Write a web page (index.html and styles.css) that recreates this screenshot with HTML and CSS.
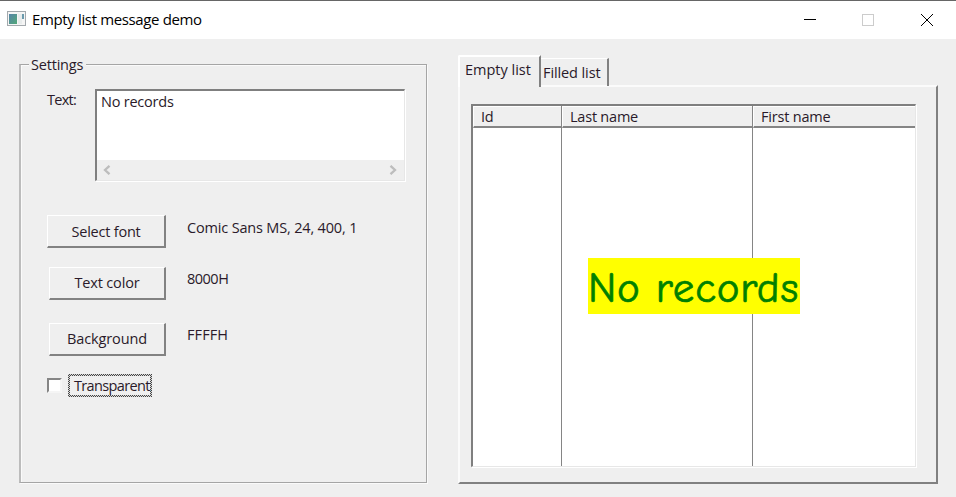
FILE: index.html
```html
<!DOCTYPE html>
<html lang="en">
<head>
<meta charset="utf-8">
<title>Empty list message demo</title>
<link rel="stylesheet" href="styles.css">
</head>
<body>
<header class="titlebar">
  <svg class="app-icon" width="19" height="16" viewBox="0 0 19 16">
    <defs><linearGradient id="g" x1="0" y1="0" x2="1" y2="1"><stop offset="0" stop-color="#5684a8"/><stop offset="1" stop-color="#52a878"/></linearGradient></defs>
    <rect x=".5" y=".5" width="18" height="14" fill="#f5f5f5" stroke="#a3a9ad"/>
    <rect x="2" y="3" width="8" height="10" fill="url(#g)"/>
    <rect x="11" y="3" width="4" height="10" fill="#e8ecec"/>
    <rect x="15" y="3" width="2" height="5" fill="#6b9bad"/>
  </svg>
  <h1 class="title">Empty list message demo</h1>
  <svg class="controls" width="132" height="16" viewBox="0 0 132 16" fill="none" shape-rendering="crispEdges">
    <path d="M0 7.5H12" stroke="#000"/>
    <rect x="58.500" y="2.500" width="11" height="11" stroke="#ccc"/>
    <path d="M117 2L129 14M129 2L117 14" stroke="#000" shape-rendering="auto"/>
  </svg>
</header>
<main class="client">
  <section class="group">
    <h2 class="legend"><span class="t-settings">Settings</span></h2>
    <div class="row row-text">
      <label class="t-text">Text:</label>
      <div class="edit sunken">
        <div class="edit-value t-norec">No records</div>
        <div class="scrollbar">
          <svg width="9" height="10" viewBox="0 0 9 10" fill="none" stroke="#bdbdbd" stroke-width="2.300"><path d="M7.500 .8L3 5L7.500 9.200"/></svg>
          <svg width="9" height="10" viewBox="0 0 9 10" fill="none" stroke="#bdbdbd" stroke-width="2.300"><path d="M1.500 .8L6 5L1.500 9.200"/></svg>
        </div>
      </div>
    </div>
    <div class="row row-font"><button class="btn btn-font"><span class="t-font">Select font</span></button><span class="value t-comic">Comic Sans MS, 24, 400, 1</span></div>
    <div class="row row-color"><button class="btn"><span class="t-color">Text color</span></button><span class="value t-hex">8000H</span></div>
    <div class="row row-back"><button class="btn"><span class="t-back">Background</span></button><span class="value t-ffff">FFFFH</span></div>
    <div class="row row-check"><span class="check"></span><span class="focus"><span class="t-trans">Transparent</span></span></div>
  </section>
  <section class="tabs">
    <nav class="tab-row">
      <div class="tab active"><span class="t-empty">Empty list</span></div>
      <div class="tab"><span class="t-filled">Filled list</span></div>
    </nav>
    <div class="panel">
      <div class="list sunken">
        <div class="col c1"><div class="head"><span class="t-id">Id</span></div></div>
        <div class="col c2"><div class="head"><span class="t-last">Last name</span></div></div>
        <div class="col c3"><div class="head"><span class="t-first">First name</span></div></div>
        <div class="message"><span class="t-msg">No records</span></div>
      </div>
    </div>
  </section>
</main>
</body>
</html>
```
FILE: styles.css
```css
* { box-sizing: border-box; }
body {
  margin: 0;
  width: 956px;
  height: 497px;
  overflow: hidden;
  background: #efefef;
  color: #2a1a2a;
  font: 14.5px/20px "Segoe UI", "Open Sans", "Noto Sans", sans-serif;
  white-space: nowrap;
}
h1, h2 { margin: 0; font: inherit; }

.titlebar {
  display: flex;
  height: 39px;
  padding: 0 20px 0 7px;
  background: #fff;
  border-top: 1px solid #666;
}
.app-icon { margin-top: 10px; }
.title { margin: 8px auto 0 6px; font-size: 15px; letter-spacing: -.36px; color: #000; }
.controls { margin: 11px 0 0; }

.client { display: flex; }

.group {
  width: 408px;
  height: 419px;
  margin: 25px 0 0 19px;
  border: 1px solid #a5a5a5;
  border-left: 2px solid #bcbcbc;
  box-shadow: 1px 1px #fafafa, inset 1px 1px #fafafa;
}
.legend {
  width: 57px;
  height: 20px;
  margin: -10px 0 0 8px;
  padding-left: 2px;
  background: #efefef;
}
.row { display: flex; margin-left: 26px; }
.row-text { height: 92px; margin-top: 15px; }
.row-text label { width: 48px; }

.sunken {
  border: 2px solid;
  border-color: #7f7f7f #e7e7e7 #e7e7e7 #7f7f7f;
  border-right-width: 1px;
  border-bottom-width: 1px;
  box-shadow: 1px 1px #fff;
  background: #fff;
}
.edit {
  display: flex;
  flex-direction: column;
  justify-content: space-between;
  width: 310px;
  height: 92px;
  margin-top: -1px;
}
.edit-value { padding: 1px 0 0 4px; }
.scrollbar {
  display: flex;
  justify-content: space-between;
  align-items: center;
  height: 20px;
  padding: 0 6px 0 5px;
  background: #efefef;
}

.row-font { height: 33px; margin-top: 33px; }
.row-color { height: 33px; margin: 19px 0 0 28px; }
.row-back { height: 34px; margin: 23px 0 0 28px; }
.btn {
  width: 117px;
  height: 33px;
  padding: 0;
  font: inherit;
  color: inherit;
  background: #efefef;
  border: solid;
  border-width: 1px 2px 2px 1px;
  border-color: #fff #828282 #828282 #fff;
}
.btn-font { width: 119px; padding-top: 1px; }
.value { margin: 3px 0 0 21px; }
.row-color .value, .row-back .value { margin-top: 2px; }
.row-check { margin-top: 17px; }
.check {
  width: 15px;
  height: 15px;
  margin-top: 4px;
  background: #fff;
  border: 2px solid;
  border-color: #858585 #f5f5f5 #f5f5f5 #858585;
}
.focus {
  width: 84px;
  height: 23px;
  margin-left: 6px;
  padding: 2px 0 0 6px;
  background:
    linear-gradient(#efefef, #efefef) 2px 2px / 80px 19px no-repeat,
    repeating-conic-gradient(#444 0 25%, #d8d8d8 0 50%) 0 0 / 2px 2px;
}

.tabs { margin: 16px 0 0 31px; }
.tab-row { display: flex; align-items: flex-end; height: 31px; }
.tab {
  width: 68px;
  height: 28px;
  padding: 4px 0 0 2px;
  border: solid;
  border-width: 1px 2px 0 0;
  border-color: #fff #818181;
}
.tab.active {
  position: relative;
  width: 83px;
  height: 32px;
  margin-bottom: -1px;
  padding: 3px 0 0 5px;
  border-width: 2px 2px 0 2px;
  border-left-color: #fff;
  border-radius: 2px 0 0 0;
  background: #efefef;
}
.panel {
  width: 480px;
  height: 399px;
  margin-top: -1px;
  padding: 17px 0 0 11px;
  border: 2px solid;
  border-color: #fbfbfb #808080 #808080 #fbfbfb;
}
.list { position: relative; display: flex; width: 445px; height: 363px; }
.col { border-right: 1px solid #858585; }
.c1 { width: 89px; }
.c2 { width: 191px; }
.c3 { flex: 1; border-right: 0; }
.head {
  height: 22px;
  padding-left: 7px;
  line-height: 19px;
  background: #efefef;
  border: solid;
  border-width: 1px 0 2px 1px;
  border-color: #fff #fff #858585;
}
.message {
  position: absolute;
  left: 115px;
  top: 152px;
  width: 212px;
  height: 56px;
  background: #ff0;
  color: #008000;
  font: 43px/61px "Comic Sans MS", "Comic Neue", "Open Sans", cursive;
  -webkit-text-stroke: .7px #008000;
  letter-spacing: .8px;
}

.t-settings { letter-spacing: -.2px; }
.t-back { letter-spacing: -.1px; }
.t-trans { letter-spacing: -.65px; }
.t-text { letter-spacing: -.7px; }
.t-font, .t-norec, .t-last { letter-spacing: -.22px; }
.t-color, .t-comic { letter-spacing: -.17px; }
.t-hex { letter-spacing: -.5px; }
.t-ffff { letter-spacing: .1px; }
.t-empty { letter-spacing: 0; }
.t-filled { letter-spacing: -.1px; }
.t-first, .t-id { letter-spacing: -.2px; }
```
